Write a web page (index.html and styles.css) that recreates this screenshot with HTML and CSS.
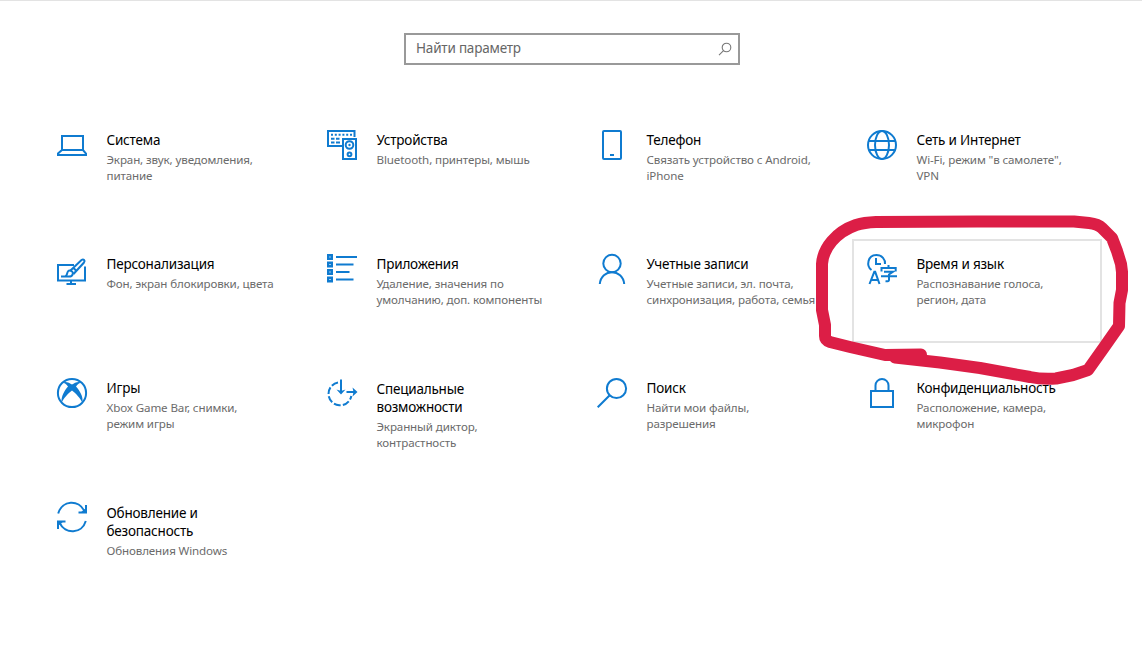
FILE: index.html
```html
<!DOCTYPE html>
<html lang="ru">
<head>
  <meta charset="UTF-8" />
  <meta name="viewport" content="width=device-width, initial-scale=1" />
  <title>Параметры</title>
  <link rel="stylesheet" href="styles.css">
</head>
<body>
  <div class="search-box">
    <input type="text" class="search-input" placeholder="Найти параметр" />
    <svg class="search-icon" width="14" height="14" viewBox="0 0 14 14">
      <circle cx="8.500" cy="5.500" r="4.300" />
      <path d="M5.500 8.700L1 13.200" />
    </svg>
  </div>

  <div class="settings">
    <div class="card">
      <svg class="icon" viewBox="0 0 30 30">
        <path d="M5 20V6h21v14M5 20h21l3 3.500V25H1v-1.500z" />
      </svg>
      <div class="info">
        <h2>Система</h2>
        <p>Экран, звук, уведомления,<br>питание</p>
      </div>
    </div>

    <div class="card">
      <svg class="icon" viewBox="0 0 30 30">
        <path d="M15 16H1V1h26.500v6M16 9h13v20H16z" />
        <path d="M4 4.800h21" stroke-dasharray="2 1.800" />
        <path d="M4 8.800h3.500M9 8.800h3.500M4 12.500h3.500M9 12.500h4" />
        <circle cx="22.500" cy="15" r="3.800" />
        <circle cx="22.500" cy="24.300" r="1.900" />
        <circle class="fill" cx="22.500" cy="15" r="1.200" />
      </svg>
      <div class="info">
        <h2>Устройства</h2>
        <p>Bluetooth, принтеры, мышь</p>
      </div>
    </div>

    <div class="card">
      <svg class="icon" viewBox="0 0 30 30">
        <rect x="6" y="1" width="18" height="28" rx="1" />
        <path d="M13 25h4" />
      </svg>
      <div class="info">
        <h2>Телефон</h2>
        <p>Связать устройство с Android,<br>iPhone</p>
      </div>
    </div>

    <div class="card">
      <svg class="icon" viewBox="0 0 30 30">
        <circle cx="15" cy="15" r="14" />
        <ellipse cx="15" cy="15" rx="7" ry="14" />
        <path d="M2 11h26M2 20h26" />
      </svg>
      <div class="info">
        <h2>Сеть и Интернет</h2>
        <p>Wi-Fi, режим "в самолете",<br>VPN</p>
      </div>
    </div>

    <div class="card">
      <svg class="icon" viewBox="0 0 30 30">
        <path d="M17 11H1v15.500h27V12.500M14 26v3.500M9.500 30h9.500" />
        <path d="M4 22.500h8c4 0 5-4 2.500-5.500-3.500-1.500-4 1-4.500 3-.4 1.600-1 2.200-2 2.500" />
        <path d="M13.500 16.500L24.500 6c2-1.500 4 .5 2.500 2.500L16.500 20M16.500 14l3 3" />
      </svg>
      <div class="info">
        <h2>Персонализация</h2>
        <p>Фон, экран блокировки, цвета</p>
      </div>
    </div>

    <div class="card">
      <svg class="icon" viewBox="0 0 30 30">
        <path d="M1.200 1.200h3.600v3.600H1.200zM1.200 8.700h3.600v3.600H1.200zM1.200 16.200h3.600v3.600H1.200zM1.200 23.700h3.600v3.600H1.200z" stroke-width="2.400" />
        <path d="M9 3h21M9 10.500h17.500M9 18h13.500M9 25.500h17.500" />
      </svg>
      <div class="info">
        <h2>Приложения</h2>
        <p>Удаление, значения по<br>умолчанию, доп. компоненты</p>
      </div>
    </div>

    <div class="card">
      <svg class="icon" viewBox="0 0 30 30">
        <circle cx="15" cy="9.500" r="8.700" />
        <path d="M2.800 30C3.500 22.500 9 18.200 15 18.200S26.500 22.500 27.200 30" />
      </svg>
      <div class="info">
        <h2>Учетные записи</h2>
        <p>Учетные записи, эл. почта,<br>синхронизация, работа, семья</p>
      </div>
    </div>

    <div class="card active">
      <svg class="icon" viewBox="0 0 30 30">
        <path d="M4.500 16C-1 12 .5 1 9.500 1c5.500 0 9 4.500 8.500 9M9 4v6h5" />
        <path d="M2.500 30L7.300 17.800h.9L12.500 30M4 26h7.500" />
        <path d="M21.500 11v3M14.500 17.500V14h14.200v3.500M17 17.800h9L22 20.500V26c0 1.200-.7 1.500-3.500 1.300M14 22.300h16" />
      </svg>
      <div class="info">
        <h2>Время и язык</h2>
        <p>Распознавание голоса,<br>регион, дата</p>
      </div>
    </div>

    <div class="card">
      <svg class="icon" viewBox="0 0 30 30">
        <circle cx="15" cy="15" r="14.100" />
        <path class="fill" d="M5.500 4.500C9 3 12.500 4.800 15 6.500 17.500 4.800 21 3 24.500 4.500 22.500 4.800 20.500 6.500 19 8.500c3.500 4 7.500 9.500 6.500 16.500C23.500 20.500 19 15.500 15 12.500 11 15.500 6.500 20.500 4.500 25 4 18 7.500 12.500 11 8.500 9.500 6.500 7.500 4.800 5.500 4.500z" />
      </svg>
      <div class="info">
        <h2>Игры</h2>
        <p>Xbox Game Bar, снимки,<br>режим игры</p>
      </div>
    </div>

    <div class="card">
      <svg class="icon" viewBox="0 0 30 30">
        <path d="M11 4.500A11.500 11.500 0 1 0 24.300 18" stroke-dasharray="7 2.200" />
        <path d="M14 1.500v13M19.500 14H29" />
        <path class="fill" d="M9.500 11.500l4.500 1.500 4.500-1.500L14 16.500zM25.500 9.500l5 4.500-5 4.500 1-4.500z" />
      </svg>
      <div class="info two-line">
        <h2>Специальные<br>возможности</h2>
        <p>Экранный диктор,<br>контрастность</p>
      </div>
    </div>

    <div class="card">
      <svg class="icon" viewBox="0 0 30 30">
        <circle cx="19.500" cy="10.500" r="9.600" />
        <path d="M12.700 17.300L.7 29.300" />
      </svg>
      <div class="info">
        <h2>Поиск</h2>
        <p>Найти мои файлы,<br>разрешения</p>
      </div>
    </div>

    <div class="card">
      <svg class="icon" viewBox="0 0 30 30">
        <path d="M4 13h22v16H4zM8.500 13V7.500a6.500 6.500 0 0 1 13 0V13" />
      </svg>
      <div class="info">
        <h2>Конфиденциальность</h2>
        <p>Расположение, камера,<br>микрофон</p>
      </div>
    </div>

    <div class="card">
      <svg class="icon" viewBox="0 0 30 30">
        <path d="M1.200 11.500C5-2 22-3 27.500 9.500M29 3v7.500h-7.500" />
        <path d="M28.800 19C25 32 8 33 2.500 20.500M1 27v-7.500h7.500" />
        <path class="fill" d="M29 6v5h-6zM1 24v-5h6z" />
      </svg>
      <div class="info two-line">
        <h2>Обновление и<br>безопасность</h2>
        <p>Обновления Windows</p>
      </div>
    </div>
  </div>

  <!-- red marker around "Время и язык" -->
  <svg class="marker" width="322" height="180" viewBox="810 210 322 180">
    <path d="M921 354.500L885 355L850 347L830 342Q825 340 825 336V325L822 310V264C823 248 836 232 856 225Q864 222.500 876 222L977 221.500H1074L1089 223Q1098 224 1102 228L1112 238L1117 251L1121 264L1122 272V290L1119.500 303L1119 326L1105 346L1088 370L1073 375L1056 378.500Q1042 379.500 1030 377L980 368L940 362.500L895 357.500" />
  </svg>
</body>
</html>
```

FILE: styles.css
```css
body {
  font-family: "Noto Sans", "Open Sans", sans-serif;
  margin: 0;
  height: 653px;
  box-sizing: border-box;
  border-top: 1px solid #e3e3e3;
  background-color: #fff;
  position: relative;
  overflow: hidden;
}

.search-box {
  width: 336px;
  height: 32px;
  box-sizing: border-box;
  margin: 32px 0 0 404px;
  padding: 0 6px 0 10px;
  border: 2px solid #999;
  display: flex;
  align-items: center;
}
.search-input {
  flex: 1;
  min-width: 0;
  padding: 0 0 2px;
  border: none;
  outline: none;
  background: none;
  font-family: inherit;
  font-size: 13.500px;
  letter-spacing: -0.2px;
}
.search-input::placeholder {
  color: #666;
  opacity: 1;
}
.search-icon {
  fill: none;
  stroke: #777;
  stroke-width: 1.1;
}

.settings {
  display: grid;
  grid-template-columns: repeat(4, 250px);
  grid-auto-rows: 104px;
  gap: 20px;
  margin: 50px 0 0 42px;
}
.card {
  box-sizing: border-box;
  padding: 13px 0 0 13px;
  border: 2px solid transparent;
  display: flex;
  align-items: flex-start;
  gap: 19.500px;
}
.card.active {
  border-color: #e3e3e3;
}

.icon {
  width: 30px;
  height: 30px;
  flex-shrink: 0;
  overflow: visible;
  fill: none;
  stroke: #0f7bd0;
  stroke-width: 2;
}
.icon .fill {
  fill: #0f7bd0;
  stroke: none;
}

.info {
  padding-top: 1px;
  white-space: nowrap;
}
.info.two-line {
  padding-top: 2px;
}
.info h2 {
  margin: 0 0 3px;
  font-size: 13.500px;
  font-weight: normal;
  line-height: 18px;
  letter-spacing: -0.2px;
  color: #000;
}
.info p {
  margin: 0;
  font-size: 11.600px;
  line-height: 16px;
  letter-spacing: -0.13px;
  color: #6b6b6b;
}

.marker {
  position: absolute;
  left: 810px;
  top: 209px;
  fill: none;
  stroke: #dc1e46;
  stroke-width: 12;
  stroke-linecap: round;
  stroke-linejoin: round;
}
```
